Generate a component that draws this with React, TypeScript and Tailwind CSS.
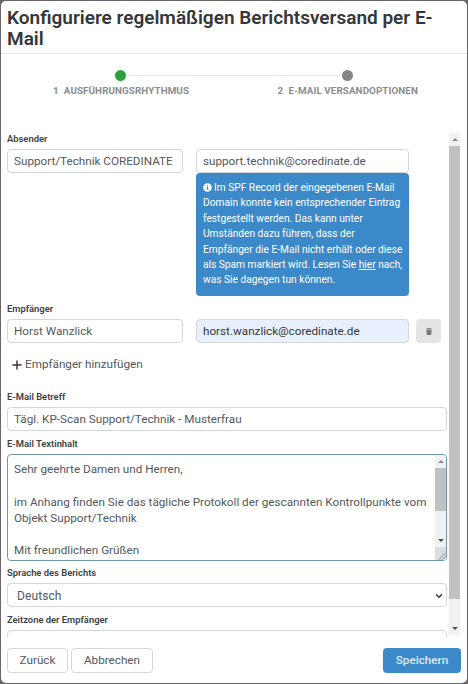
import { Plus, ChevronDown } from "lucide-react";
import { FaInfoCircle, FaTrash } from "react-icons/fa";

const Label = ({ children, className = "" }: { children: string; className?: string }) => (
  <div className={`text-[9.4px] leading-[12px] font-semibold text-[#3a3f45] ${className}`}>{children}</div>
);

const Field = ({ value, className = "bg-white text-[#53585d]" }: { value: string; className?: string }) => (
  <div className={`h-[24px] flex items-center px-[6px] pt-px border border-[#d4d7da] rounded-[4px] text-[11.7px] whitespace-nowrap overflow-hidden ${className}`}>
    {value}
  </div>
);

const Arrow = ({ up, className = "h-[13px]" }: { up?: boolean; className?: string }) => (
  <div className={`flex items-center justify-center shrink-0 ${className}`}>
    <div className={`w-0 h-0 border-x-[3px] border-x-transparent ${up ? "border-b-[3px] border-b-[#8a8a8a]" : "border-t-[3px] border-t-[#505050]"}`} />
  </div>
);

export default function App() {
  return (
    <div className="w-[468px] h-[684px] bg-[#6b656b] pt-px px-px pb-px overflow-hidden" style={{ fontFamily: "Roboto, sans-serif" }}>
      <div className="h-full bg-white rounded-[5px] flex flex-col overflow-hidden">
        {/* Header */}
        <div className="h-[53px] shrink-0 border-b border-[#e3e5e7] pl-[6px] pr-2 pt-[6px]">
          <h1 className="text-[19px] leading-[21px] font-semibold text-[#33373c]">
            Konfiguriere regelmäßigen Berichtsversand per E-Mail
          </h1>
        </div>

        {/* Stepper */}
        <div className="h-[76px] shrink-0 pt-4">
          <div className="flex items-center pl-[114px] pr-[114px]">
            <div className="w-[11px] h-[11px] rounded-full bg-[#2f9e3f] shrink-0" />
            <div className="flex-1 h-px bg-[#e3e5e7] mx-[2px]" />
            <div className="w-[11px] h-[11px] rounded-full bg-[#858585] shrink-0" />
          </div>
          <div className="flex justify-between pl-[52px] pr-[49px] mt-[3px] text-[9.8px] leading-[14px] font-bold text-[#8a8d90] tracking-[0.1px]">
            <span>1&nbsp; AUSFÜHRUNGSRHYTHMUS</span>
            <span>2&nbsp; E-MAIL VERSANDOPTIONEN</span>
          </div>
        </div>

        {/* Scrollable body */}
        <div className="h-[507px] shrink-0 flex overflow-hidden px-[6px]">
          <div className="w-[440px] shrink-0 pt-[3px]">
            <Label>Absender</Label>
            <div className="flex gap-[13px] mt-1">
              <Field value="Support/Technik COREDINATE" className="w-[176px] text-[#53585d]" />
              <div className="w-[213px]">
                <Field value="support.technik@coredinate.de" className="text-[#53585d]" />
                <div className="bg-[#3c89c9] rounded-[4px] text-white text-[10.2px] leading-[15.4px] pl-[7px] pr-[4px] pt-[7px] h-[123px]">
                  <FaInfoCircle className="inline w-[9px] h-[9px] -mt-[2px] mr-[2px]" />
                  Im SPF Record der eingegebenen E-Mail Domain konnte kein entsprechender Eintrag festgestellt werden. Das kann unter Umständen dazu führen, dass der Empfänger die E-Mail nicht erhält oder diese als Spam markiert wird. Lesen Sie <span className="underline">hier</span> nach, was Sie dagegen tun können.
                </div>
              </div>
            </div>

            <Label className="mt-[7px]">Empfänger</Label>
            <div className="flex mt-1 items-center">
              <Field value="Horst Wanzlick" className="w-[176px] text-[#53585d]" />
              <Field value="horst.wanzlick@coredinate.de" className="w-[213px] ml-[13px] bg-[#e8f0fe] text-[#33373c]" />
              <div className="w-[25px] h-[24px] ml-[7px] bg-[#e4e4e4] rounded-[4px] flex items-center justify-center">
                <FaTrash className="w-[6px] h-[7px] text-[#777]" />
              </div>
            </div>
            <div className="flex items-center h-[16px] mt-[14px] pl-[3px] text-[11.7px] text-[#53585d]">
              <Plus className="w-[14px] h-[14px] text-[#33373c] mr-px" strokeWidth={2.5} />
              Empfänger hinzufügen
            </div>

            <Label className="mt-[18px]">E-Mail Betreff</Label>
            <Field value="Tägl. KP-Scan Support/Technik - Musterfrau" className="mt-[4px] text-[#53585d]" />

            <Label className="mt-[7px]">E-Mail Textinhalt</Label>
            <div className="mt-[4px] h-[107px] border border-[#6f99a8] rounded-[4px] flex overflow-hidden">
              <div className="flex-1 pl-[6px] pt-[6px] text-[11.7px] leading-[16.3px] text-[#53585d]">
                <p>Sehr geehrte Damen und Herren,</p>
                <p className="mt-[16.3px]">im Anhang finden Sie das tägliche Protokoll der gescannten Kontrollpunkte vom Objekt Support/Technik</p>
                <p className="mt-[16.3px]">Mit freundlichen Grüßen</p>
              </div>
              <div className="w-[11px] shrink-0 bg-[#f1f1f1] flex flex-col">
                <Arrow up />
                <div className="h-[43px] bg-[#c1c1c1] shrink-0" />
                <div className="flex-1" />
                <Arrow />
                <div className="h-[13px] bg-[#dcdcdc] shrink-0 flex items-end justify-end">
                  <svg width="8" height="8" viewBox="0 0 8 8" className="text-[#777]">
                    <path d="M1 7.5 7.5 1M4.5 7.5 7.5 4.5" stroke="currentColor" strokeWidth="0.8" fill="none" />
                  </svg>
                </div>
              </div>
            </div>

            <Label className="mt-[6px]">Sprache des Berichts</Label>
            <div className="mt-[4px] h-[24px] flex items-center justify-between pl-[9px] pr-[2px] pt-px border border-[#d4d7da] rounded-[4px] text-[12px] tracking-[0.1px] text-[#53585d]">
              Deutsch
              <ChevronDown className="w-[10px] h-[10px] text-[#33373c]" strokeWidth={3.5} />
            </div>

            <Label className="mt-[7px]">Zeitzone der Empfänger</Label>
            <div className="mt-[4px] h-[24px] border border-[#d4d7da] rounded-[4px]" />
          </div>

          {/* Scrollbar */}
          <div className="w-[11px] ml-[2px] mt-[3px] mb-[2px] shrink-0 bg-[#f1f1f1] flex flex-col">
            <Arrow up />
            <div className="h-[453px] bg-[#c1c1c1] shrink-0" />
            <div className="flex-1" />
            <Arrow />
          </div>
        </div>

        {/* Footer */}
        <div className="flex-1 flex items-start justify-between px-[6px] pt-[11px]">
          <div className="flex gap-[3px]">
            <button className="h-[25px] w-[61px] bg-white border border-[#d4d7da] rounded-[4px] text-[11.7px] text-[#53585d]">Zurück</button>
            <button className="h-[25px] w-[82px] bg-white border border-[#d4d7da] rounded-[4px] text-[11.7px] text-[#53585d]">Abbrechen</button>
          </div>
          <button className="h-[25px] w-[78px] bg-[#3c89c9] rounded-[4px] text-[11.7px] font-medium text-[#d9ecf9]">Speichern</button>
        </div>
      </div>
    </div>
  );
}
